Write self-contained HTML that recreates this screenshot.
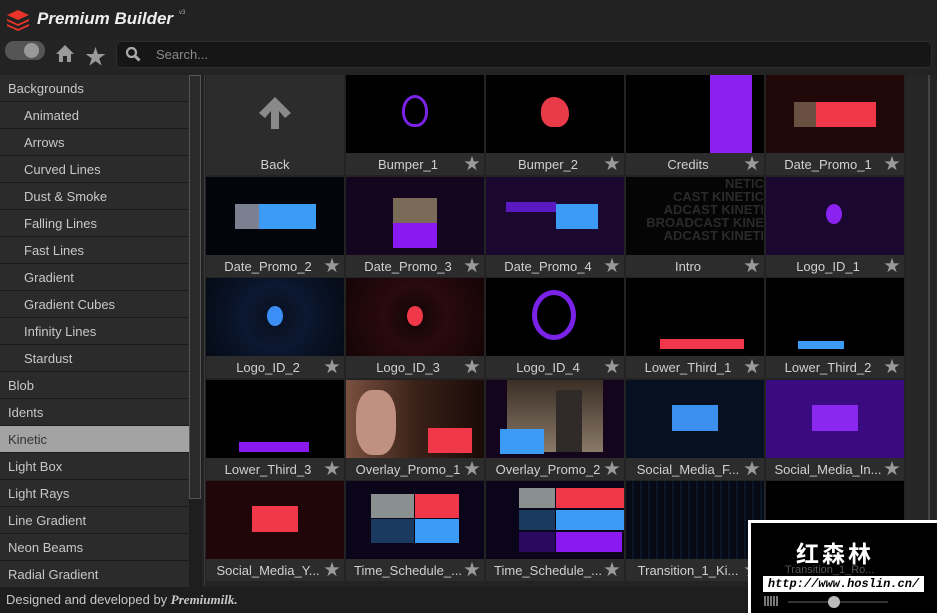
<!DOCTYPE html>
<html><head><meta charset="utf-8"><style>
*{margin:0;padding:0;box-sizing:border-box}
body{width:937px;height:613px;background:#232323;font-family:"Liberation Sans","Noto Sans CJK SC",sans-serif;overflow:hidden;position:relative;color:#ccc}
.a{position:absolute}
.side div{height:27px;line-height:27px;font-size:13px;color:#c8c8c8;border-bottom:1px solid #1a1a1a;background:#2b2b2b;padding-left:8px}
.side div.s{padding-left:24px}
.side div.k{background:#a3a3a3;color:#333}
.t{position:absolute;width:138px;height:100px;background:#2c2c2c}
.th{position:absolute;left:0;top:0;width:138px;height:78px;background:#000;overflow:hidden}
.lb{position:absolute;left:0;top:78px;width:138px;height:22px;line-height:23px;font-size:13px;color:#d0d0d0;text-align:center;padding-right:14px}
.st{position:absolute;right:4px;top:81px;font-size:16px;color:#9a9a9a;line-height:17px}
.c{position:absolute}
</style></head><body>
<div class="a" style="left:0;top:0;width:937px;height:40px;background:#222"></div>
<svg class="a" style="left:5px;top:8px" width="26" height="24" viewBox="0 0 26 24"><path d="M13 2 L24 7 L13 12 L2 7Z" fill="#e8342a"/><path d="M2 11 L13 16 L24 11 L24 13 L13 18 L2 13Z" fill="#e8342a"/><path d="M2 16 L13 21 L24 16 L24 18 L13 23 L2 18Z" fill="#e8342a"/></svg>
<div class="a" style="left:37px;top:9px;font-size:17px;font-weight:bold;font-style:italic;color:#eee">Premium Builder</div>
<div class="a" style="left:179px;top:10px;font-size:6px;color:#aaa">v3</div>
<div class="a" style="left:5px;top:41px;width:40px;height:19px;border-radius:9px;background:#555"></div>
<div class="a" style="left:24px;top:43px;width:15px;height:15px;border-radius:50%;background:#999"></div>
<svg class="a" style="left:55px;top:44px" width="20" height="19" viewBox="0 0 20 19"><path d="M10 1 L19 10 L16 10 L16 18 L12 18 L12 12 L8 12 L8 18 L4 18 L4 10 L1 10Z" fill="#9a9a9a"/></svg>
<div class="a" style="left:85px;top:41px;font-size:21px;color:#9a9a9a">★</div>
<div class="a" style="left:116px;top:41px;width:816px;height:27px;border-radius:5px;background:#161616;border:1px solid #2e2e2e"></div>
<svg class="a" style="left:125px;top:46px" width="16" height="16" viewBox="0 0 16 16"><circle cx="6.5" cy="6.5" r="4.5" stroke="#aaa" stroke-width="2.2" fill="none"/><path d="M10 10 L14.5 14.5" stroke="#aaa" stroke-width="3"/></svg>
<div class="a" style="left:156px;top:47px;font-size:13px;color:#8a8a8a">Search...</div>
<div class="a side" style="left:0;top:75px;width:189px">
<div>Backgrounds</div><div class="s">Animated</div><div class="s">Arrows</div><div class="s">Curved Lines</div><div class="s">Dust &amp; Smoke</div><div class="s">Falling Lines</div><div class="s">Fast Lines</div><div class="s">Gradient</div><div class="s">Gradient Cubes</div><div class="s">Infinity Lines</div><div class="s">Stardust</div><div>Blob</div><div>Idents</div><div class="k">Kinetic</div><div>Light Box</div><div>Light Rays</div><div>Line Gradient</div><div>Neon Beams</div><div>Radial Gradient</div>
</div>
<div class="a" style="left:189px;top:75px;width:13px;height:512px;background:#1e1e1e"></div>
<div class="a" style="left:189px;top:75px;width:12px;height:424px;background:#2a2a2a;border:1px solid #555"></div>
<div class="a" style="left:204px;top:75px;width:1px;height:512px;background:#3a3a3a"></div>
<div class="a" style="left:906px;top:75px;width:31px;height:512px;background:#262626"></div>
<div class="a" style="left:928px;top:75px;width:2px;height:512px;background:#444"></div>

<div class="t" style="left:206px;top:75px"><div class="th" style="background:#2c2c2c"><svg style="position:absolute;left:50px;top:20px" width="38" height="36" viewBox="0 0 38 36"><path d="M19 2 L35 18 L29 23 L23 16 L23 34 L15 34 L15 16 L9 23 L3 18Z" fill="#8a8a8a"/></svg></div><div class="lb" style="padding:0">Back</div></div>
<div class="t" style="left:346px;top:75px"><div class="th"><div class="c" style="left:56px;top:20px;width:26px;height:32px;border:3px solid #7a22e8;border-radius:50% 50% 45% 45%"></div></div><div class="lb">Bumper_1</div><div class="st">★</div></div>
<div class="t" style="left:486px;top:75px"><div class="th"><div class="c" style="left:55px;top:22px;width:28px;height:30px;background:#e83a48;border-radius:50% 60% 45% 45%"></div></div><div class="lb">Bumper_2</div><div class="st">★</div></div>
<div class="t" style="left:626px;top:75px"><div class="th"><div class="c" style="left:84px;top:0;width:42px;height:78px;background:#8a1ff0"></div></div><div class="lb">Credits</div><div class="st">★</div></div>
<div class="t" style="left:766px;top:75px"><div class="th" style="background:#200808"><div class="c" style="left:28px;top:27px;width:22px;height:25px;background:#6a5040"></div><div class="c" style="left:50px;top:27px;width:60px;height:25px;background:#f0384a"></div></div><div class="lb">Date_Promo_1</div><div class="st">★</div></div>

<div class="t" style="left:206px;top:177px"><div class="th" style="background:#02050c"><div class="c" style="left:29px;top:27px;width:24px;height:25px;background:#7a8090"></div><div class="c" style="left:53px;top:27px;width:57px;height:25px;background:#3b9bf5"></div></div><div class="lb">Date_Promo_2</div><div class="st">★</div></div>
<div class="t" style="left:346px;top:177px"><div class="th" style="background:#14061e"><div class="c" style="left:47px;top:21px;width:44px;height:25px;background:#7a6a58"></div><div class="c" style="left:47px;top:46px;width:44px;height:25px;background:#8a18f0"></div></div><div class="lb">Date_Promo_3</div><div class="st">★</div></div>
<div class="t" style="left:486px;top:177px"><div class="th" style="background:#1a0830"><div class="c" style="left:20px;top:25px;width:50px;height:10px;background:#5a18c0"></div><div class="c" style="left:70px;top:27px;width:42px;height:25px;background:#3b9bf5"></div></div><div class="lb">Date_Promo_4</div><div class="st">★</div></div>
<div class="t" style="left:626px;top:177px"><div class="th" style="background:#050505;color:#2a2a2a;font-weight:bold;font-size:13px;line-height:13px;text-align:right">NETIC<br>CAST KINETIC<br>ADCAST KINETI<br>BROADCAST KINE<br>ADCAST KINETI</div><div class="lb">Intro</div><div class="st">★</div></div>
<div class="t" style="left:766px;top:177px"><div class="th" style="background:#1a0830"><div class="c" style="left:60px;top:27px;width:16px;height:20px;background:#8a22f0;border-radius:50%"></div></div><div class="lb">Logo_ID_1</div><div class="st">★</div></div>

<div class="t" style="left:206px;top:278px"><div class="th" style="background:radial-gradient(circle at 50% 50%,#0a1020,#0b1830 40%,#050a15)"><div class="c" style="left:61px;top:28px;width:16px;height:20px;background:#3a8ef5;border-radius:50%"></div></div><div class="lb">Logo_ID_2</div><div class="st">★</div></div>
<div class="t" style="left:346px;top:278px"><div class="th" style="background:radial-gradient(circle at 50% 50%,#100505,#2a0a0e 40%,#140406)"><div class="c" style="left:61px;top:28px;width:16px;height:20px;background:#f0384a;border-radius:50%"></div></div><div class="lb">Logo_ID_3</div><div class="st">★</div></div>
<div class="t" style="left:486px;top:278px"><div class="th"><div class="c" style="left:46px;top:12px;width:44px;height:50px;border:5px solid #7a22e8;border-radius:50%"></div></div><div class="lb">Logo_ID_4</div><div class="st">★</div></div>
<div class="t" style="left:626px;top:278px"><div class="th"><div class="c" style="left:34px;top:61px;width:84px;height:10px;background:#f0384a"></div></div><div class="lb">Lower_Third_1</div><div class="st">★</div></div>
<div class="t" style="left:766px;top:278px"><div class="th"><div class="c" style="left:32px;top:63px;width:46px;height:8px;background:#3b9bf5"></div></div><div class="lb">Lower_Third_2</div><div class="st">★</div></div>

<div class="t" style="left:206px;top:380px"><div class="th"><div class="c" style="left:33px;top:62px;width:70px;height:10px;background:#8a18f0"></div></div><div class="lb">Lower_Third_3</div><div class="st">★</div></div>
<div class="t" style="left:346px;top:380px"><div class="th" style="background:linear-gradient(90deg,#7a5040,#3a2218 50%,#1a0a08)"><div class="c" style="left:10px;top:10px;width:40px;height:65px;background:#c09080;border-radius:40%"></div><div class="c" style="left:82px;top:48px;width:44px;height:25px;background:#f0384a"></div></div><div class="lb">Overlay_Promo_1</div><div class="st">★</div></div>
<div class="t" style="left:486px;top:380px"><div class="th" style="background:#12051c"><div class="c" style="left:21px;top:0;width:96px;height:72px;background:linear-gradient(#3a2e26,#8a7a68)"></div><div class="c" style="left:70px;top:10px;width:26px;height:62px;background:#302a28"></div><div class="c" style="left:14px;top:49px;width:44px;height:25px;background:#3b9bf5"></div></div><div class="lb">Overlay_Promo_2</div><div class="st">★</div></div>
<div class="t" style="left:626px;top:380px"><div class="th" style="background:#061020"><div class="c" style="left:46px;top:25px;width:46px;height:26px;background:#3b8fee"></div></div><div class="lb">Social_Media_F...</div><div class="st">★</div></div>
<div class="t" style="left:766px;top:380px"><div class="th" style="background:#3a0a80"><div class="c" style="left:46px;top:25px;width:46px;height:26px;background:#8a28f0"></div></div><div class="lb">Social_Media_In...</div><div class="st">★</div></div>

<div class="t" style="left:206px;top:481px"><div class="th" style="background:#200608"><div class="c" style="left:46px;top:25px;width:46px;height:26px;background:#f0384a"></div></div><div class="lb">Social_Media_Y...</div><div class="st">★</div></div>
<div class="t" style="left:346px;top:481px"><div class="th" style="background:#0a0518"><div class="c" style="left:25px;top:13px;width:43px;height:24px;background:#8a9090"></div><div class="c" style="left:69px;top:13px;width:44px;height:24px;background:#f0384a"></div><div class="c" style="left:25px;top:38px;width:43px;height:24px;background:#1a3a60"></div><div class="c" style="left:69px;top:38px;width:44px;height:24px;background:#3b9bf5"></div></div><div class="lb">Time_Schedule_...</div><div class="st">★</div></div>
<div class="t" style="left:486px;top:481px"><div class="th" style="background:#0a0518"><div class="c" style="left:33px;top:7px;width:36px;height:20px;background:#8a9090"></div><div class="c" style="left:70px;top:7px;width:68px;height:20px;background:#f0384a"></div><div class="c" style="left:33px;top:29px;width:36px;height:20px;background:#1a3a60"></div><div class="c" style="left:70px;top:29px;width:68px;height:20px;background:#3b9bf5"></div><div class="c" style="left:33px;top:51px;width:36px;height:20px;background:#2a0a60"></div><div class="c" style="left:70px;top:51px;width:66px;height:20px;background:#8a18f0"></div></div><div class="lb">Time_Schedule_...</div><div class="st">★</div></div>
<div class="t" style="left:626px;top:481px"><div class="th" style="background:repeating-linear-gradient(90deg,#050a14 0 6px,#0a1628 6px 8px)"></div><div class="lb">Transition_1_Ki...</div><div class="st">★</div></div>
<div class="t" style="left:766px;top:481px"><div class="th"></div><div class="lb">Transition_1_Ro...</div><div class="st">★</div></div>
<div class="a" style="left:0;top:587px;width:937px;height:26px;background:#1e1e1e"></div>
<div class="a" style="left:6px;top:592px;font-size:13px;color:#c8c8c8">Designed and developed by <i style="font-family:'Liberation Serif',serif;font-weight:bold">Premiumilk.</i></div>
<div class="a" style="left:748px;top:520px;width:189px;height:93px;background:#000;border:3px solid #fff;border-right:none;border-bottom:none"></div>
<div class="a" style="left:796px;top:538px;font-size:23px;font-weight:bold;color:#fff;letter-spacing:3px;font-family:'Noto Sans CJK SC',sans-serif;line-height:28px">红森林</div>
<div class="a" style="left:785px;top:564px;font-size:11px;color:#555">Transition_1_Ro...</div>
<div class="a" style="left:763px;top:576px;width:161px;height:16px;background:#fff;color:#000;font-family:'Liberation Mono',monospace;font-style:italic;font-weight:bold;font-size:12px;line-height:16px;text-align:center">http://www.hoslin.cn/</div>
<div class="a" style="left:764px;top:596px;width:14px;height:10px;background:repeating-linear-gradient(90deg,#777 0 2px,#000 2px 3px)"></div>
<div class="a" style="left:788px;top:601px;width:100px;height:2px;background:#333"></div>
<div class="a" style="left:828px;top:596px;width:12px;height:12px;border-radius:50%;background:#bbb"></div>
</body></html>
